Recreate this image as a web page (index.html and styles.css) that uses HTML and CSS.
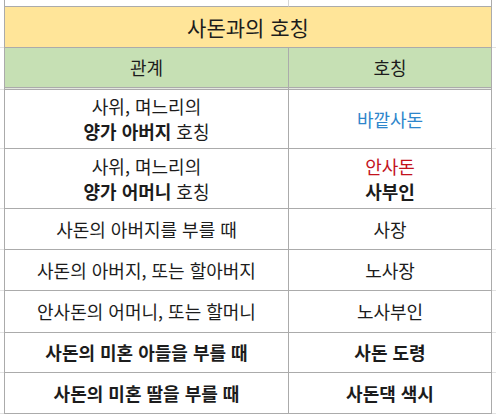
FILE: index.html
```html
<!DOCTYPE html>
<html lang="ko">
<head>
<meta charset="utf-8">
<link rel="stylesheet" href="styles.css">
</head>
<body>
<div class="sheet">
  <div class="g"></div><div class="c c1 top"></div><div class="c c2 top"></div><div class="g"></div>

  <div class="g line"></div><div class="c title">사돈과의 호칭</div><div class="g line"></div>

  <div class="g"></div><div class="c c1 head">관계</div><div class="c c2 head">호칭</div><div class="g"></div>

  <div class="g line"></div><div class="c c1 freeze"></div><div class="c c2 freeze"></div><div class="g"></div>

  <div class="g line"></div>
  <div class="c c1 two"><span>사위, 며느리의</span><span><b>양가 아버지</b> 호칭</span></div>
  <div class="c c2 blue">바깥사돈</div>
  <div class="g line"></div>

  <div class="g line"></div>
  <div class="c c1 two"><span>사위, 며느리의</span><span><b>양가 어머니</b> 호칭</span></div>
  <div class="c c2 two"><span class="red">안사돈</span><span><b>사부인</b></span></div>
  <div class="g line"></div>

  <div class="g line"></div><div class="c c1">사돈의 아버지를 부를 때</div><div class="c c2">사장</div><div class="g line"></div>

  <div class="g line"></div><div class="c c1">사돈의 아버지, 또는 할아버지</div><div class="c c2">노사장</div><div class="g line"></div>

  <div class="g line"></div><div class="c c1">안사돈의 어머니, 또는 할머니</div><div class="c c2">노사부인</div><div class="g line"></div>

  <div class="g line"></div><div class="c c1 bold">사돈의 미혼 아들을 부를 때</div><div class="c c2 bold">사돈 도령</div><div class="g line"></div>

  <div class="g line"></div><div class="c c1 bold">사돈의 미혼 딸을 부를 때</div><div class="c c2 bold">사돈댁 색시</div><div class="g line"></div>
</div>
</body>
</html>
```

FILE: styles.css
```css
* { box-sizing: border-box; }

html, body {
  margin: 0;
  padding: 0;
  background: #ffffff;
}

body {
  font-family: "Noto Sans CJK KR", "Noto Sans", sans-serif;
  font-size: 18px;
  color: #1c1c1c;
}

.sheet {
  display: grid;
  grid-template-columns: 4px 285px 203px 4px;
  grid-template-rows: 7px 41px 40px 2px 59px 60px 41px 41px 42px 40px 41px;
  width: 496px;
}

.g {
  background: #fff;
}
.g.line {
  border-bottom: 1px solid #e2e2e2;
}

.c {
  display: flex;
  align-items: center;
  justify-content: center;
  text-align: center;
  border-bottom: 1px solid #ababab;
  border-right: 1px solid #ababab;
  line-height: 25px;
  white-space: nowrap;
}
.c1 {
  border-left: 1px solid #ababab;
}

.top {
  background: #fff;
}
.c1.top {
  border-right-color: #d6d6d6;
}

.title {
  grid-column: 2 / 4;
  border-left: 1px solid #ababab;
  background: #ffe599;
  font-size: 21px;
}

.head {
  background: #c6e0b4;
}

.freeze {
  background: #e3e8df;
}

.two {
  flex-direction: column;
}
.two span {
  display: block;
}

.blue { color: #2e86cb; }
.red { color: #c3121c; }
.bold, b { font-weight: 700; }
```
